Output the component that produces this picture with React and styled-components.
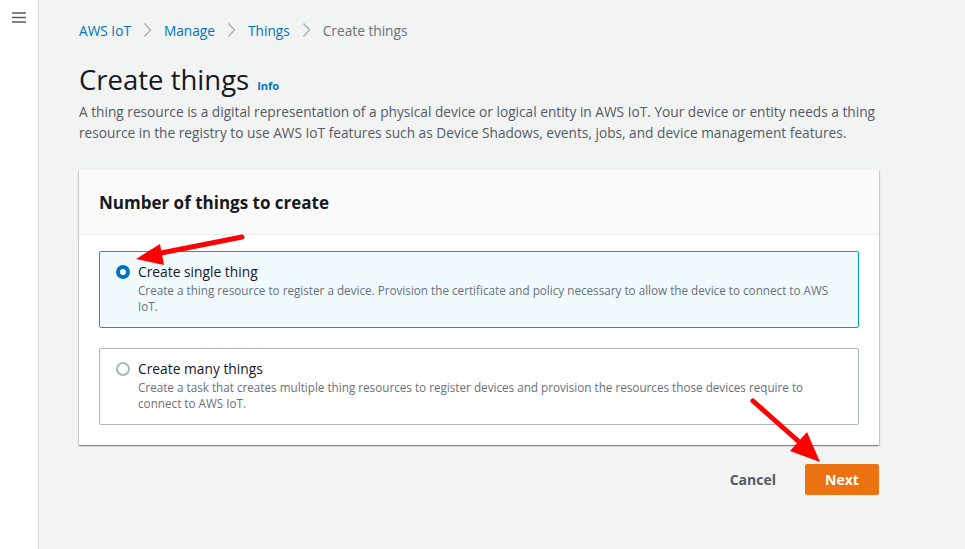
import React from "react";
import styled, { createGlobalStyle } from "styled-components";

const Global = createGlobalStyle`
  html, body { margin: 0; padding: 0; }
  body {
    background: #f2f3f3;
    font-family: "Open Sans", "Liberation Sans", sans-serif;
    color: #16191f;
  }
`;

const Layout = styled.div`
  display: flex;
  min-height: 549px;
  position: relative;
`;

const SideBar = styled.div`
  width: 39px;
  background: #fff;
  border-right: 1px solid #d5dbdb;
  display: flex;
  justify-content: center;
  padding-top: 12px;
  box-sizing: border-box;
`;

const Main = styled.main`
  flex: 1;
  padding: 19px 0 0 40px;
`;

const Content = styled.div`
  width: 800px;
`;

const Crumbs = styled.nav`
  display: flex;
  align-items: center;
  gap: 9px;
  font-size: 13.7px;
  height: 22px;
`;

const Crumb = styled.span`
  color: ${(p) => (p.$current ? "#687078" : "#0073bb")};
`;

const Sep = styled.span`
  display: flex;
  color: #aab7b8;
  margin: 0 3px;
`;

const TitleRow = styled.div`
  display: flex;
  align-items: baseline;
  gap: 8px;
  margin-top: 21px;
`;

const Title = styled.h1`
  margin: 0;
  font-size: 27.5px;
  font-weight: 400;
  line-height: 36px;
  color: #16191f;
`;

const InfoLink = styled.span`
  font-size: 11px;
  font-weight: 700;
  color: #0073bb;
`;

const Desc = styled.p`
  margin: 3px 0 0;
  font-size: 13.7px;
  line-height: 21px;
  color: #545b64;
`;

const Card = styled.section`
  margin-top: 27px;
  background: #fff;
  box-shadow: 0 1px 1px 0 rgba(0, 28, 36, 0.3), 1px 1px 1px 0 rgba(0, 28, 36, 0.15),
    -1px 1px 1px 0 rgba(0, 28, 36, 0.15);
`;

const CardHead = styled.h2`
  margin: 0;
  padding: 20px 20px 19px;
  font-size: 17px;
  font-weight: 700;
  line-height: 25px;
  background: #fafafa;
  border-bottom: 1px solid #eaeded;
`;

const CardBody = styled.div`
  padding: 16px 20px 20px;
  display: flex;
  flex-direction: column;
  gap: 20px;
`;

const Option = styled.label`
  display: flex;
  gap: 8px;
  padding: 9px 16px 12px;
  min-height: 54px;
  border: 1px solid ${(p) => (p.$selected ? "#00a1c9" : "#aab7b8")};
  background: ${(p) => (p.$selected ? "#f1faff" : "#fff")};
  border-radius: 2px;
`;

const Radio = styled.span`
  flex: none;
  width: 14px;
  height: 14px;
  margin-top: 4px;
  border-radius: 50%;
  box-sizing: border-box;
  border: ${(p) => (p.$on ? "4px solid #0073bb" : "2px solid #aab7b8")};
  background: #fff;
`;

const OptText = styled.div`
  display: flex;
  flex-direction: column;
`;

const OptLabel = styled.span`
  font-size: 13.8px;
  line-height: 21px;
  color: #16191f;
`;

const OptDesc = styled.span`
  font-size: 11.7px;
  line-height: 16px;
  color: #687078;
`;

const Actions = styled.div`
  display: flex;
  justify-content: flex-end;
  align-items: center;
  gap: 29px;
  margin-top: 19px;
`;

const Cancel = styled.button`
  border: none;
  background: none;
  font-family: inherit;
  font-size: 14px;
  font-weight: 700;
  color: #545b64;
  padding: 0;
`;

const Next = styled.button`
  border: none;
  border-radius: 2px;
  background: #ec7211;
  color: #fff;
  font-family: inherit;
  font-size: 14px;
  font-weight: 700;
  width: 74px;
  height: 31px;
`;

const Overlay = styled.svg`
  position: absolute;
  left: 0;
  top: 0;
  pointer-events: none;
`;

const Chevron = () => (
  <Sep>
    <svg width="9" height="16" viewBox="0 0 9 16">
      <path d="M1.5 1.5 L7.5 8 L1.5 14.5" fill="none" stroke="currentColor" strokeWidth="1.6" />
    </svg>
  </Sep>
);

export default function App() {
  return (
    <>
      <Global />
      <Layout>
        <SideBar>
          <svg width="14" height="11" viewBox="0 0 14 11">
            <path d="M0 1h14M0 5.5h14M0 10h14" stroke="#545b64" strokeWidth="1.6" />
          </svg>
        </SideBar>
        <Main>
          <Content>
            <Crumbs>
              <Crumb>AWS IoT</Crumb>
              <Chevron />
              <Crumb>Manage</Crumb>
              <Chevron />
              <Crumb>Things</Crumb>
              <Chevron />
              <Crumb $current>Create things</Crumb>
            </Crumbs>
            <TitleRow>
              <Title>Create things</Title>
              <InfoLink>Info</InfoLink>
            </TitleRow>
            <Desc>
              A thing resource is a digital representation of a physical device or logical entity in AWS IoT. Your device
              or entity needs a thing resource in the registry to use AWS IoT features such as Device Shadows, events,
              jobs, and device management features.
            </Desc>
            <Card>
              <CardHead>Number of things to create</CardHead>
              <CardBody>
                <Option $selected>
                  <Radio $on />
                  <OptText>
                    <OptLabel>Create single thing</OptLabel>
                    <OptDesc>
                      Create a thing resource to register a device. Provision the certificate and policy necessary to
                      allow the device to connect to AWS IoT.
                    </OptDesc>
                  </OptText>
                </Option>
                <Option>
                  <Radio />
                  <OptText>
                    <OptLabel>Create many things</OptLabel>
                    <OptDesc>
                      Create a task that creates multiple thing resources to register devices and provision the
                      resources those devices require to connect to AWS IoT.
                    </OptDesc>
                  </OptText>
                </Option>
              </CardBody>
            </Card>
            <Actions>
              <Cancel>Cancel</Cancel>
              <Next>Next</Next>
            </Actions>
          </Content>
        </Main>
        <Overlay width="965" height="549" viewBox="0 0 965 549">
          <line x1="242" y1="237" x2="156" y2="254" stroke="#f00" strokeWidth="5" strokeLinecap="round" />
          <polygon points="136,259 160,244 164,265" fill="#f00" />
          <line x1="753" y1="401" x2="806" y2="448" stroke="#f00" strokeWidth="5" strokeLinecap="round" />
          <polygon points="820,462 807,432 790,451" fill="#f00" />
        </Overlay>
      </Layout>
    </>
  );
}
